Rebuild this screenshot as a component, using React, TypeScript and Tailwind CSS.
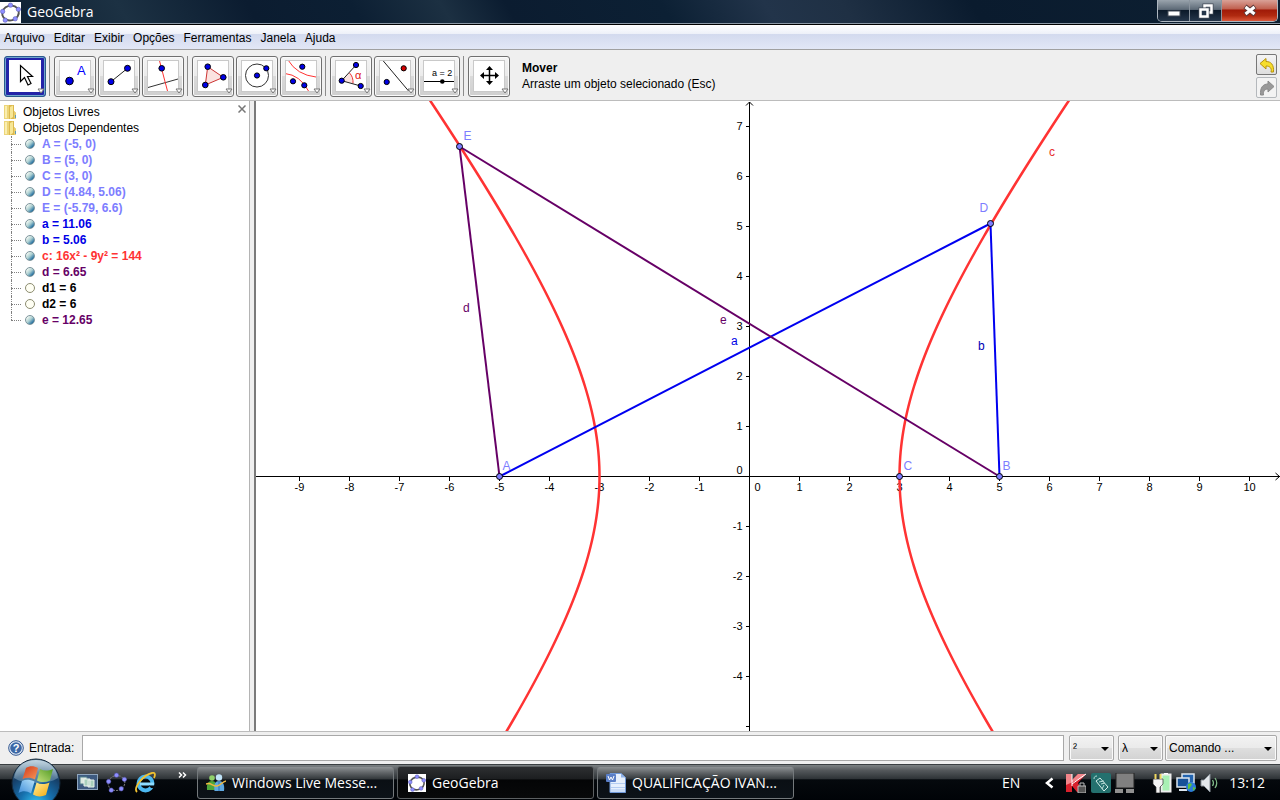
import { useState, type ReactNode } from "react";

const BLUE = "#0000e6";
const POINT = "#7d7dff";
const RED = "#ff3333";
const PURPLE = "#660066";

const menus = ["Arquivo", "Editar", "Exibir", "Opções", "Ferramentas", "Janela", "Ajuda"];

const Dot = ({ x, y, r = 3, fill = BLUE }: { x: number; y: number; r?: number; fill?: string }) => (
  <circle cx={x} cy={y} r={r} fill={fill} stroke="#000" strokeWidth="1" />
);

const GeoGebraLogo = ({ className, plain = false }: { className: string; plain?: boolean }) => (
  <svg viewBox="0 0 20 20" className={className}>
    {!plain && <rect width="20" height="20" fill="#fff" />}
    <ellipse
      cx="10"
      cy="10.5"
      rx="8"
      ry="7"
      fill="none"
      stroke={plain ? "#777" : "#555"}
      strokeWidth={plain ? 1 : 1.8}
      strokeDasharray={plain ? "2 1" : undefined}
      transform="rotate(-15 10 10.5)"
    />
    {[[10, 3], [17.5, 7], [14.5, 16], [5, 17.3], [2.5, 9]].map(([x, y]) => (
      <circle key={x} cx={x} cy={y} r="2.1" fill="#8f8fff" stroke="#5555aa" strokeWidth="0.5" />
    ))}
  </svg>
);

const tools: { name: string; icon: ReactNode }[][] = [
  [
    {
      name: "Mover",
      icon: <path d="M11.5 5.5v16l4-4 3.5 7.5 3-1.5-3.5-7h5z" fill="#fff" stroke="#000" strokeWidth="1.2" />,
    },
  ],
  [
    {
      name: "Novo ponto",
      icon: (
        <>
          <Dot x={10.5} y={21} r={3.8} />
          <text x="18" y="15" fontSize="13" fill="#0000ff">A</text>
        </>
      ),
    },
    {
      name: "Segmento",
      icon: (
        <>
          <path d="M8 21.7L24.5 8.3" stroke="#222" />
          <Dot x={8} y={21.7} />
          <Dot x={24.5} y={8.3} />
        </>
      ),
    },
    {
      name: "Reta perpendicular",
      icon: (
        <>
          <path d="M1 27.5L31 19" stroke="#333" />
          <path d="M12.3 0L20.5 31" stroke={RED} />
          <Dot x={14.7} y={8.3} r={2.8} />
        </>
      ),
    },
  ],
  [
    {
      name: "Polígono",
      icon: (
        <>
          <path d="M10.7 6.7L26.3 17.3 8.3 25z" fill="#fbe3e0" stroke="#c33" />
          <Dot x={10.7} y={6.7} r={2.8} />
          <Dot x={26.3} y={17.3} r={2.8} />
          <Dot x={8.3} y={25} r={2.8} />
        </>
      ),
    },
    {
      name: "Círculo",
      icon: (
        <>
          <circle cx="16" cy="15.5" r="11.5" fill="none" stroke="#333" />
          <Dot x={16} y={15.5} r={2.6} />
          <Dot x={25.3} y={8.3} r={2.6} />
        </>
      ),
    },
    {
      name: "Hipérbole",
      icon: (
        <>
          <path d="M3 0Q12 15 31 17M0 13.5Q15 15 23.5 31" fill="none" stroke={RED} />
          <Dot x={17.3} y={6.7} r={2.6} />
          <Dot x={8} y={21.3} r={2.6} />
          <Dot x={19.3} y={25.3} r={2.6} />
        </>
      ),
    },
  ],
  [
    {
      name: "Ângulo",
      icon: (
        <>
          <path d="M6.7 20.7L14.5 13Q18.5 17 18 23.5z" fill="#fbe3e0" />
          <path d="M14.5 13Q18.5 17 18 23.5" fill="none" stroke="#e33" />
          <path d="M21 5L6.7 20.7 25.7 26" fill="none" stroke="#222" />
          <Dot x={21} y={5} r={2.6} />
          <Dot x={6.7} y={20.7} r={2.6} />
          <Dot x={25.7} y={26} r={2.6} />
          <text x="20" y="19" fontSize="11" fill="#e02020">α</text>
        </>
      ),
    },
    {
      name: "Reflexão",
      icon: (
        <>
          <path d="M3.5 0L30 31.5" stroke="#222" />
          <Dot x={24.7} y={8.3} r={2.6} fill="#d40000" />
          <Dot x={7.7} y={22} r={2.6} />
        </>
      ),
    },
    {
      name: "Seletor",
      icon: (
        <>
          <text x="9" y="16" fontSize="9">a = 2</text>
          <path d="M1 21.5h30" stroke="#000" />
          <circle cx="19.3" cy="21.5" r="2.3" />
        </>
      ),
    },
  ],
  [
    {
      name: "Deslocar eixos",
      icon: (
        <>
          <path d="M16.5 8v15M9 15.5h15" stroke="#000" strokeWidth="1.5" />
          <path d="M16.5 6l3.5 4h-7zM16.5 25l3.5-4h-7zM7 15.5l4-3.500v7zM26 15.5l-4-3.500v7z" />
        </>
      ),
    },
  ],
];

const objects = [
  { text: "A = (-5, 0)", color: "text-[#7d7dff]", shown: true },
  { text: "B = (5, 0)", color: "text-[#7d7dff]", shown: true },
  { text: "C = (3, 0)", color: "text-[#7d7dff]", shown: true },
  { text: "D = (4.84, 5.06)", color: "text-[#7d7dff]", shown: true },
  { text: "E = (-5.79, 6.6)", color: "text-[#7d7dff]", shown: true },
  { text: "a = 11.06", color: "text-[#0000e6]", shown: true },
  { text: "b = 5.06", color: "text-[#0000e6]", shown: true },
  { text: "c: 16x² - 9y² = 144", color: "text-[#ff3333]", shown: true },
  { text: "d = 6.65", color: "text-[#660066]", shown: true },
  { text: "d1 = 6", color: "text-black", shown: false },
  { text: "d2 = 6", color: "text-black", shown: false },
  { text: "e = 12.65", color: "text-[#660066]", shown: true },
];

const TitleBar = () => (
  <header className="flex h-[25px] shrink-0 items-start justify-between border-b border-black bg-[linear-gradient(60deg,#0d1f31_0%,#1c3143_10%,#0b1c30_20%,#0c1f33_28%,#1c3042_35%,#0b1c30_40%,#0c2034_52%,#22344a_60%,#1f3044_66%,#0a1b2e_76%,#0d2032_100%)] pr-[2px] shadow-[inset_0_-1px_0_#8b98a5]">
    <div className="flex h-6 items-center gap-[6px] text-white">
      <GeoGebraLogo className="size-[21px]" />
      <h1 className="font-['Open_Sans',sans-serif] text-sm">GeoGebra</h1>
    </div>
    <div className="flex h-[22px] w-[121px] overflow-hidden rounded-b-[5px] border border-t-0 border-[#aeb7c0]">
      <button
        aria-label="Minimizar"
        className="flex w-8 items-center justify-center border-r border-[#8a949e] bg-[linear-gradient(#9aa4ad_0%,#5d6a77_45%,#0c1a2a_50%,#25364a_100%)]"
      >
        <svg viewBox="0 0 14 14" className="size-[14px]">
          <rect x="1" y="7" width="12" height="5" fill="#fff" stroke="#444c58" />
        </svg>
      </button>
      <button
        aria-label="Restaurar"
        className="flex w-8 items-center justify-center border-r border-[#8a949e] bg-[linear-gradient(#9aa4ad_0%,#5d6a77_45%,#0c1a2a_50%,#25364a_100%)]"
      >
        <svg viewBox="0 0 16 16" className="size-4" fill="none">
          <path d="M6.5 2.5h7v7h-7z" stroke="#444c58" strokeWidth="4" />
          <path d="M6.5 2.5h7v7h-7z" stroke="#fff" strokeWidth="2.5" />
          <path d="M2.5 6.5h7v7h-7z" stroke="#444c58" strokeWidth="4" />
          <path d="M2.5 6.5h7v7h-7z" stroke="#fff" strokeWidth="2.5" fill="#25364a" />
        </svg>
      </button>
      <button
        aria-label="Fechar"
        className="flex flex-1 items-center justify-center bg-[linear-gradient(#d9a197_0%,#c0604f_42%,#a01a08_48%,#b02a10_75%,#d9573a_100%)]"
      >
        <svg viewBox="0 0 14 14" className="size-[14px]">
          <path d="M2 2.5l10 8M12 2.5l-10 8" stroke="#5c3a3a" strokeWidth="5" />
          <path d="M2.5 3l9 7M11.500 3l-9 7" stroke="#fff" strokeWidth="3" />
        </svg>
      </button>
    </div>
  </header>
);

const Toolbar = () => {
  const [active, setActive] = useState("Mover");

  return (
    <div className="flex h-[51px] shrink-0 items-center border-b border-[#bcbcbc] bg-[#efefef] pt-[2px] pr-[3px] pl-1">
      {tools.map((group, i) => (
        <div key={i} className="flex items-center">
          {i > 0 && <span className="mr-1 ml-[3px] h-10 w-px bg-[#8c8c8c]" />}
          <div className="flex gap-[2px]">
            {group.map((tool) => (
              <button
                key={tool.name}
                aria-label={tool.name}
                onClick={() => setActive(tool.name)}
                className={
                  tool.name === active
                    ? "relative flex h-[41px] w-[42px] items-center justify-center rounded-[3px] border border-[#2a5a8c] bg-[#2323a8] shadow-[inset_0_0_0_1px_#6fa6cc]"
                    : "relative flex h-[41px] w-[42px] items-center justify-center rounded-[3px] border border-[#707070] bg-[linear-gradient(#f4f4f4_0%,#ebebeb_48%,#dadada_50%,#cfcfcf_100%)] shadow-[inset_0_0_0_1px_#fafafa]"
                }
              >
                <svg
                  viewBox="0 0 32 32"
                  className={
                    tool.name === active
                      ? "size-8 bg-white"
                      : "size-8 bg-white outline outline-[#c9c9c9] -outline-offset-1"
                  }
                  fontFamily="Liberation Sans, sans-serif"
                >
                  {tool.icon}
                </svg>
                <svg viewBox="0 0 8 6" className="absolute right-0 bottom-[2px] h-[6px] w-2">
                  <path d="M1 1h6L4 5z" fill="#fff" stroke="#777" />
                </svg>
              </button>
            ))}
          </div>
        </div>
      ))}
      <div className="ml-3 leading-4">
        <p className="font-bold">Mover</p>
        <p>Arraste um objeto selecionado (Esc)</p>
      </div>
      <div className="ml-auto flex flex-col gap-[2px]">
        <button aria-label="Desfazer" className="flex size-[21px] items-center justify-center rounded-[2px] border border-[#777] bg-[linear-gradient(#f4f4f4,#dedede)]">
          <svg viewBox="0 0 16 16" className="size-4">
            <path d="M1 6.5L7 1.5v3c5 0 8 3 7.5 10.5H12c1-3.5-1-6-5-6v3z" fill="#f6de2c" stroke="#b8920c" />
          </svg>
        </button>
        <button aria-label="Refazer" className="flex size-[21px] items-center justify-center rounded-[2px] border border-[#b4b8bc] bg-[#f3f3f3]">
          <svg viewBox="0 0 16 16" className="size-4">
            <path d="M15 6.5L9 1v3C4 4 1 7.5 1.5 15h3C4 11.5 5.500 9 9 9v3z" fill="#999" stroke="#8a8a8a" />
          </svg>
        </button>
      </div>
    </div>
  );
};

const Folder = () => (
  <svg viewBox="0 0 13 16" className="h-4 w-[13px]">
    <path d="M0 1h5v14H0z" fill="#ecd579" />
    <path d="M1 2h2v12H1z" fill="#faeeb0" />
    <path d="M5 1h5v6l2 2v6H5z" fill="#dcb94e" />
    <path d="M6 3l3-1.500V13l-3 2z" fill="#f7e796" />
    <path d="M10 7l2 2v6h-2z" fill="#e9cf70" />
    <path d="M11.5 11v3" stroke="#5e9cb8" />
  </svg>
);

const AlgebraView = () => (
  <aside className="relative w-[250px] shrink-0 border-r border-[#b4b4b4] bg-white pt-[3px]">
    <button aria-label="Fechar painel" className="absolute top-1 right-[3px]">
      <svg viewBox="0 0 8 8" className="size-2">
        <path d="M.5.5l7 7M7.5.5l-7 7" stroke="#777" strokeWidth="1.5" />
      </svg>
    </button>
    <ul className="leading-4">
      <li className="flex h-4 items-center gap-[6px] pl-1">
        <Folder />
        Objetos Livres
      </li>
      <li>
        <div className="flex h-4 items-center gap-[6px] pl-1">
          <Folder />
          Objetos Dependentes
        </div>
        <ul className="ml-[11px]">
          {objects.map((o, i) => (
            <li key={o.text} className="relative flex h-4 items-center font-bold">
              <span
                className={
                  i === objects.length - 1
                    ? "absolute top-0 left-0 h-2 border-l border-dotted border-[#808080]"
                    : "absolute top-0 left-0 h-4 border-l border-dotted border-[#808080]"
                }
              />
              <span className="w-[10px] border-t border-dotted border-[#808080]" />
              <span
                className={
                  o.shown
                    ? "ml-1 size-[10px] rounded-full border border-[#7c949c] bg-[linear-gradient(135deg,#f4faf4_15%,#a9cdd0_50%,#1f6c9e_85%)]"
                    : "ml-1 size-[10px] rounded-full border border-[#8c8c70] bg-[#fffff4]"
                }
              />
              <span className={`ml-[7px] ${o.color}`}>{o.text}</span>
            </li>
          ))}
        </ul>
      </li>
    </ul>
  </aside>
);

// pixel position of the origin and size of one unit in the graphics view
const OX = 493.5;
const OY = 375.5;
const UNIT = 50;
const px = (x: number) => OX + x * UNIT;
const py = (y: number) => OY - y * UNIT;

const branch = (sign: number) => {
  const pts: string[] = [];
  for (let y = -6; y <= 8; y += 0.1) {
    pts.push(`${px(sign * 3 * Math.sqrt(1 + (y * y) / 16))},${py(y)}`);
  }
  return pts.join(" ");
};

const range = (from: number, to: number) =>
  Array.from({ length: to - from + 1 }, (_, i) => from + i).filter((n) => n !== 0);

const segments = [
  { from: [-5, 0], to: [4.82, 5.06], color: "#0000f0" },
  { from: [5, 0], to: [4.82, 5.06], color: "#0000f0" },
  { from: [-5, 0], to: [-5.8, 6.6], color: PURPLE },
  { from: [5, 0], to: [-5.8, 6.6], color: PURPLE },
];

const points = [
  { name: "A", x: -5, y: 0, dx: 3, dy: -7 },
  { name: "B", x: 5, y: 0, dx: 3, dy: -7 },
  { name: "C", x: 3, y: 0, dx: 4, dy: -7 },
  { name: "D", x: 4.82, y: 5.06, dx: -11, dy: -12 },
  { name: "E", x: -5.8, y: 6.6, dx: 4, dy: -7 },
];

const labels = [
  { name: "a", x: 475, y: 244, color: BLUE },
  { name: "b", x: 722, y: 249, color: "#0000b4" },
  { name: "c", x: 793, y: 55, color: "#e62e2e" },
  { name: "d", x: 207, y: 211, color: PURPLE },
  { name: "e", x: 464, y: 223, color: PURPLE },
];

const GraphicsView = () => (
  <main className="min-w-0 flex-1 overflow-hidden bg-white">
    <svg className="h-full w-full" fontFamily="Liberation Sans, sans-serif" fontSize="12">
      <g stroke="#000" shapeRendering="crispEdges">
        <line x1="0" y1={OY} x2="100%" y2={OY} />
        <line x1={OX} y1="1" x2={OX} y2="100%" />
        {range(-9, 10).map((n) => (
          <line key={n} x1={px(n)} y1={OY} x2={px(n)} y2={OY + 4} />
        ))}
        {range(-5, 7).map((n) => (
          <line key={n} x1={OX - 4} y1={py(n)} x2={OX} y2={py(n)} />
        ))}
      </g>
      <path d="M490 4.5l3.500-3.500 3.500 3.500M1019.500 372l4 3.500-4 3.500" fill="none" stroke="#000" />
      <g fontSize="11">
        {range(-9, 10).map((n) => (
          <text key={n} x={px(n)} y={OY + 14} textAnchor="middle">{n}</text>
        ))}
        {range(-4, 7).map((n) => (
          <text key={n} x={OX - 7} y={py(n) + 3} textAnchor="end">{n}</text>
        ))}
        <text x={OX + 5} y={OY + 14}>0</text>
        <text x={OX - 7} y={OY - 3} textAnchor="end">0</text>
      </g>
      <polyline points={branch(-1)} fill="none" stroke={RED} strokeWidth="2.5" />
      <polyline points={branch(1)} fill="none" stroke={RED} strokeWidth="2.5" />
      {segments.map((s, i) => (
        <line
          key={i}
          x1={px(s.from[0])}
          y1={py(s.from[1])}
          x2={px(s.to[0])}
          y2={py(s.to[1])}
          stroke={s.color}
          strokeWidth="2"
        />
      ))}
      {points.map((p) => (
        <g key={p.name}>
          <Dot x={px(p.x)} y={py(p.y)} fill={POINT} />
          <text x={px(p.x) + p.dx} y={py(p.y) + p.dy} fill={POINT}>{p.name}</text>
        </g>
      ))}
      {labels.map((l) => (
        <text key={l.name} x={l.x} y={l.y} fill={l.color}>{l.name}</text>
      ))}
    </svg>
  </main>
);

const Picker = ({ label, value, className }: { label: string; value: string; className: string }) => (
  <div className={`relative h-[26px] ${className}`}>
    <select
      aria-label={label}
      className="h-full w-full appearance-none rounded-[2px] border border-[#a8a8a8] bg-[linear-gradient(#f2f2f2_0%,#ebebeb_48%,#dedede_52%,#d2d2d2_100%)] pl-[3px] shadow-[inset_0_0_0_1px_#fafafa]"
    >
      <option>{value}</option>
    </select>
    <svg viewBox="0 0 8 4" className="pointer-events-none absolute top-3 right-[5px] h-1 w-2">
      <path d="M0 0h8L4 4z" />
    </svg>
  </div>
);

const InputBar = () => (
  <div className="flex h-[33px] shrink-0 items-center border-t border-[#bcbcbc] bg-[#efefef] pr-[3px] pl-2">
    <svg viewBox="0 0 16 16" className="size-4">
      <circle cx="8" cy="8" r="7.3" fill="#e4ecf6" stroke="#2f5590" />
      <circle cx="8" cy="8" r="5.8" fill="#3c67a5" />
      <text x="8" y="12" textAnchor="middle" fontSize="11" fontWeight="700" fill="#fff" fontFamily="Liberation Sans, sans-serif">?</text>
    </svg>
    <label htmlFor="entrada" className="ml-[5px] w-[53px]">Entrada:</label>
    <input id="entrada" className="h-[26px] min-w-0 flex-1 border border-[#a8a8a8] bg-white px-1 outline-none" />
    <Picker label="Símbolos" value="²" className="ml-[5px] w-[45px]" />
    <Picker label="Letras gregas" value="λ" className="ml-1 w-[45px]" />
    <Picker label="Comandos" value="Comando ..." className="ml-[2px] w-28" />
  </div>
);

const StartOrb = () => (
  <svg viewBox="0 0 50 50" className="size-[50px]">
    <defs>
      <radialGradient id="orb" cx="50%" cy="95%" r="85%">
        <stop offset="0" stopColor="#35c8f5" />
        <stop offset=".4" stopColor="#1670ae" />
        <stop offset=".8" stopColor="#163e66" />
        <stop offset="1" stopColor="#52738d" />
      </radialGradient>
      <linearGradient id="gloss" x1="0" y1="0" x2="0" y2="1">
        <stop offset="0" stopColor="#c9dbe6" stopOpacity=".95" />
        <stop offset="1" stopColor="#8fb0c6" stopOpacity=".35" />
      </linearGradient>
      <linearGradient id="flagRed" x1="0" y1="0" x2="1" y2="1">
        <stop offset="0" stopColor="#d4381a" />
        <stop offset="1" stopColor="#f79a5a" />
      </linearGradient>
      <linearGradient id="flagGreen" x1="0" y1="1" x2="1" y2="0">
        <stop offset="0" stopColor="#c4e07c" />
        <stop offset="1" stopColor="#4f9a22" />
      </linearGradient>
      <linearGradient id="flagBlue" x1="0" y1="1" x2="1" y2="0">
        <stop offset="0" stopColor="#3d8cd8" />
        <stop offset="1" stopColor="#b6e2fa" />
      </linearGradient>
      <linearGradient id="flagYellow" x1="0" y1="0" x2="1" y2="1">
        <stop offset="0" stopColor="#fff09a" />
        <stop offset="1" stopColor="#f5a80c" />
      </linearGradient>
    </defs>
    <circle cx="25" cy="25" r="24" fill="url(#orb)" stroke="#14283a" />
    <path d="M3 20C5 8 14 2 25 2s20 6 22 18c-6 4-14 5-22 5S9 24 3 20z" fill="url(#gloss)" />
    <path d="M15 10c4-2.500 8-2 12 0l-3 11.500c-4-2-8-2.500-12.500-.5z" fill="url(#flagRed)" />
    <path d="M29 11c4 2 8 2 13 0L39 22.500c-4.500 2-9 2-13 0z" fill="url(#flagGreen)" />
    <path d="M11 23c4-2 8-1.500 12.500.5L20 35.500c-4-2.500-8-3-12.500-.5z" fill="url(#flagBlue)" />
    <path d="M25.500 24.500c4 2 8 2 13 0L35 37c-4.500 2-9 2-13-.5z" fill="url(#flagYellow)" />
  </svg>
);

const tasks = [
  {
    title: "Windows Live Messe...",
    icon: (
      <svg viewBox="0 0 20 18" className="h-[18px] w-5">
        <circle cx="6" cy="4" r="2.8" fill="#8fd06a" />
        <path d="M1 16c-.5-6 1-9 5-9s4.500 3 4 9z" fill="#4da63a" />
        <circle cx="13" cy="3.5" r="3.2" fill="#bfe2f7" />
        <path d="M8.5 17c-1-7 1-10 4.500-10s6 3 5 10z" fill="#5fa8e0" />
        <path d="M13 7v10" stroke="#2f70b0" />
        <path d="M0 10c5-2 7 3 11 2s5-4 9-5" fill="none" stroke="#f0b840" strokeWidth="1.5" />
      </svg>
    ),
    active: false,
  },
  { title: "GeoGebra", icon: <GeoGebraLogo className="size-[18px]" />, active: true },
  {
    title: "QUALIFICAÇÃO IVAN...",
    icon: (
      <svg viewBox="0 0 20 20" className="size-5">
        <path d="M4 .5h11l4.500 4v15H4z" fill="#e6f0fd" stroke="#6f98d8" />
        <path d="M15 .5v4h4.500" fill="#8fb2e8" />
        <path d="M5 10h14v1H5zM5 14h14v1H5z" fill="#b4cdf2" />
        <path d="M5 16h14v3H5z" fill="#c9dcf7" />
        <rect x="0" y="1" width="10" height="8" rx="1" fill="#5a7fc8" />
        <path d="M2 3l1.500 4L5 4l1.500 3L8 3" fill="none" stroke="#fff" />
      </svg>
    ),
    active: false,
  },
];

const Tray = () => (
  <div className="ml-auto flex items-center pr-[15px] text-white">
    <span>EN</span>
    <button aria-label="Mostrar ícones ocultos" className="ml-6">
      <svg viewBox="0 0 10 12" className="h-3 w-[10px]">
        <path d="M8.5 1.5L3 6l5.500 4.500" fill="none" stroke="#fff" strokeWidth="2.5" />
      </svg>
    </button>
    <svg viewBox="0 0 20 20" className="ml-3 size-5">
      <path d="M0 1h6v6l6-6h8l-8 9 5 9h-6l-5-6v6H0z" fill="#d8202c" />
      <path d="M0 1h6v6l6-6h8l-4 4-16 7z" fill="#f2858a" />
      <path d="M6 1v12M6 11L20 1" stroke="#fff" />
      <path d="M12 13h8v7h-8z" fill="#555" stroke="#bbb" />
      <path d="M14 13v-3h4v3" fill="none" stroke="#bbb" />
    </svg>
    <svg viewBox="0 0 20 20" className="ml-[5px] size-5">
      <rect width="20" height="20" rx="2" fill="#24706e" />
      <path d="M5 8l4-3 8 9-4 4z" fill="none" stroke="#d5efea" />
      <path d="M8 9l5-1M10 11l4-1M13 12l-2 4M3 6c0-2 1-3 3-3" stroke="#b8dcd8" fill="none" />
    </svg>
    <svg viewBox="0 0 20 20" className="ml-1 size-5">
      <rect x="1" width="18" height="15" fill="#808080" stroke="#222" />
      <path d="M0 16h8v4H0zM11 16h8v4h-8z" fill="#909090" />
    </svg>
    <svg viewBox="0 0 20 20" className="ml-[17px] size-5">
      <rect x="9.5" y="1.5" width="9" height="17" fill="#a8f0b4" stroke="#eee" strokeWidth="2" />
      <path d="M12 0h4v1h-4z" fill="#fff" />
      <path d="M1 6h10v5l-3 3v6H4v-6l-3-3z" fill="#f4f4f4" stroke="#333" strokeWidth=".7" />
      <path d="M3.500 1v5M8.500 1v5" stroke="#f0d860" strokeWidth="2" />
    </svg>
    <svg viewBox="0 0 21 20" className="ml-1 h-5 w-[21px]">
      <rect x="6" y="1" width="12" height="9" fill="#2264b0" stroke="#dde6ee" strokeWidth="1.5" />
      <rect x="1" y="5" width="12" height="9" fill="#175298" stroke="#dde6ee" strokeWidth="1.5" />
      <path d="M3 17h8" stroke="#dde6ee" strokeWidth="2" />
      <circle cx="15" cy="14" r="5" fill="#2c7ad8" />
      <path d="M12 11c3-2 5 0 3 2s-1 4-3 3zM17 14l3 1-3 3z" fill="#5cc43c" />
    </svg>
    <svg viewBox="0 0 20 20" className="ml-[3px] size-5">
      <path d="M1 7h3l6-6v18l-6-6H1z" fill="#e4e8ec" stroke="#8a929a" />
      <path d="M12.5 7q2 3 0 6M15 5q3.500 5 0 10" fill="none" stroke="#7fb886" strokeWidth="1.3" />
    </svg>
    <time className="ml-[9px]">13:12</time>
  </div>
);

const Taskbar = () => (
  <footer className="flex h-9 shrink-0 border-t border-[#3a3f42] bg-[linear-gradient(#7d8284_0%,#55595c_15%,#2d3236_40%,#05090d_42%,#000307_100%)] font-['Open_Sans',sans-serif] text-sm">
    <button aria-label="Iniciar" className="relative w-[77px] shrink-0">
      <span className="absolute -top-[7px] left-[11px]">
        <StartOrb />
      </span>
    </button>
    <nav className="flex w-[120px] shrink-0 items-center gap-2">
      <button aria-label="Mostrar área de trabalho">
        <svg viewBox="0 0 21 17" className="h-[17px] w-[21px]">
          <rect x=".5" y=".5" width="20" height="15" fill="#3d5a80" stroke="#8fa6be" />
          <path d="M3 3h7v7H3z" fill="#dce8e0" stroke="#4f7f8c" />
          <path d="M7 5h6v7H7zM11 6h6v7h-6z" fill="#a8d0bc" stroke="#e8f0ec" />
        </svg>
      </button>
      <button aria-label="GeoGebra">
        <GeoGebraLogo plain className="size-[21px]" />
      </button>
      <button aria-label="Internet Explorer">
        <svg viewBox="0 0 21 21" className="size-[21px]">
          <circle cx="10.5" cy="11.5" r="7" fill="none" stroke="#4cb8f0" strokeWidth="4" />
          <path d="M5 12h14" stroke="#8fdcff" strokeWidth="3" />
          <path d="M14 13.500h7v2.500h-5z" fill="#080c10" />
          <path d="M2 20C-2 16 8 3 17 1c4-1 3 3 2 5" fill="none" stroke="#f2c230" strokeWidth="1.8" />
        </svg>
      </button>
      <button aria-label="Mais" className="mb-4 ml-[14px]">
        <svg viewBox="0 0 9 6" className="h-[6px] w-[9px]">
          <path d="M1 .5L3.500 3 1 5.500M5 .5L7.500 3 5 5.500" fill="none" stroke="#fff" strokeWidth="1.5" />
        </svg>
      </button>
    </nav>
    <div className="flex items-center gap-[3px]">
      {tasks.map((task) => (
        <button
          key={task.title}
          className={
            task.active
              ? "flex h-[33px] w-[197px] items-center gap-[6px] rounded-[3px] border border-[#5c6062] bg-[linear-gradient(#2e3032_0%,#1c1e20_38%,#040506_42%,#08090a_100%)] pl-[10px] text-white"
              : "flex h-[33px] w-[197px] items-center gap-[6px] rounded-[3px] border border-[#74797c] bg-[linear-gradient(#8f9395_0%,#5d6164_20%,#34393c_38%,#0a0f14_42%,#0c1218_100%)] pl-2 text-white"
          }
        >
          {task.icon}
          {task.title}
        </button>
      ))}
    </div>
    <Tray />
  </footer>
);

const App = () => (
  <div className="flex h-screen flex-col overflow-hidden bg-[#efefef] font-['Liberation_Sans',Arial,sans-serif] text-xs text-black">
    <TitleBar />
    <nav className="flex h-[25px] shrink-0 items-center gap-[9px] border-b border-[#a0a0a0] bg-[linear-gradient(#ffffff_0%,#eef1f9_36%,#d3daee_38%,#e2e7f6_100%)] pt-[2px] pl-1">
      {menus.map((menu) => (
        <button key={menu}>{menu}</button>
      ))}
    </nav>
    <Toolbar />
    <div className="flex min-h-0 flex-1">
      <AlgebraView />
      <div className="w-[6px] shrink-0 border-r-2 border-[#7a7a7a] bg-[#efefef]" />
      <GraphicsView />
    </div>
    <InputBar />
    <Taskbar />
  </div>
);

export default App;
